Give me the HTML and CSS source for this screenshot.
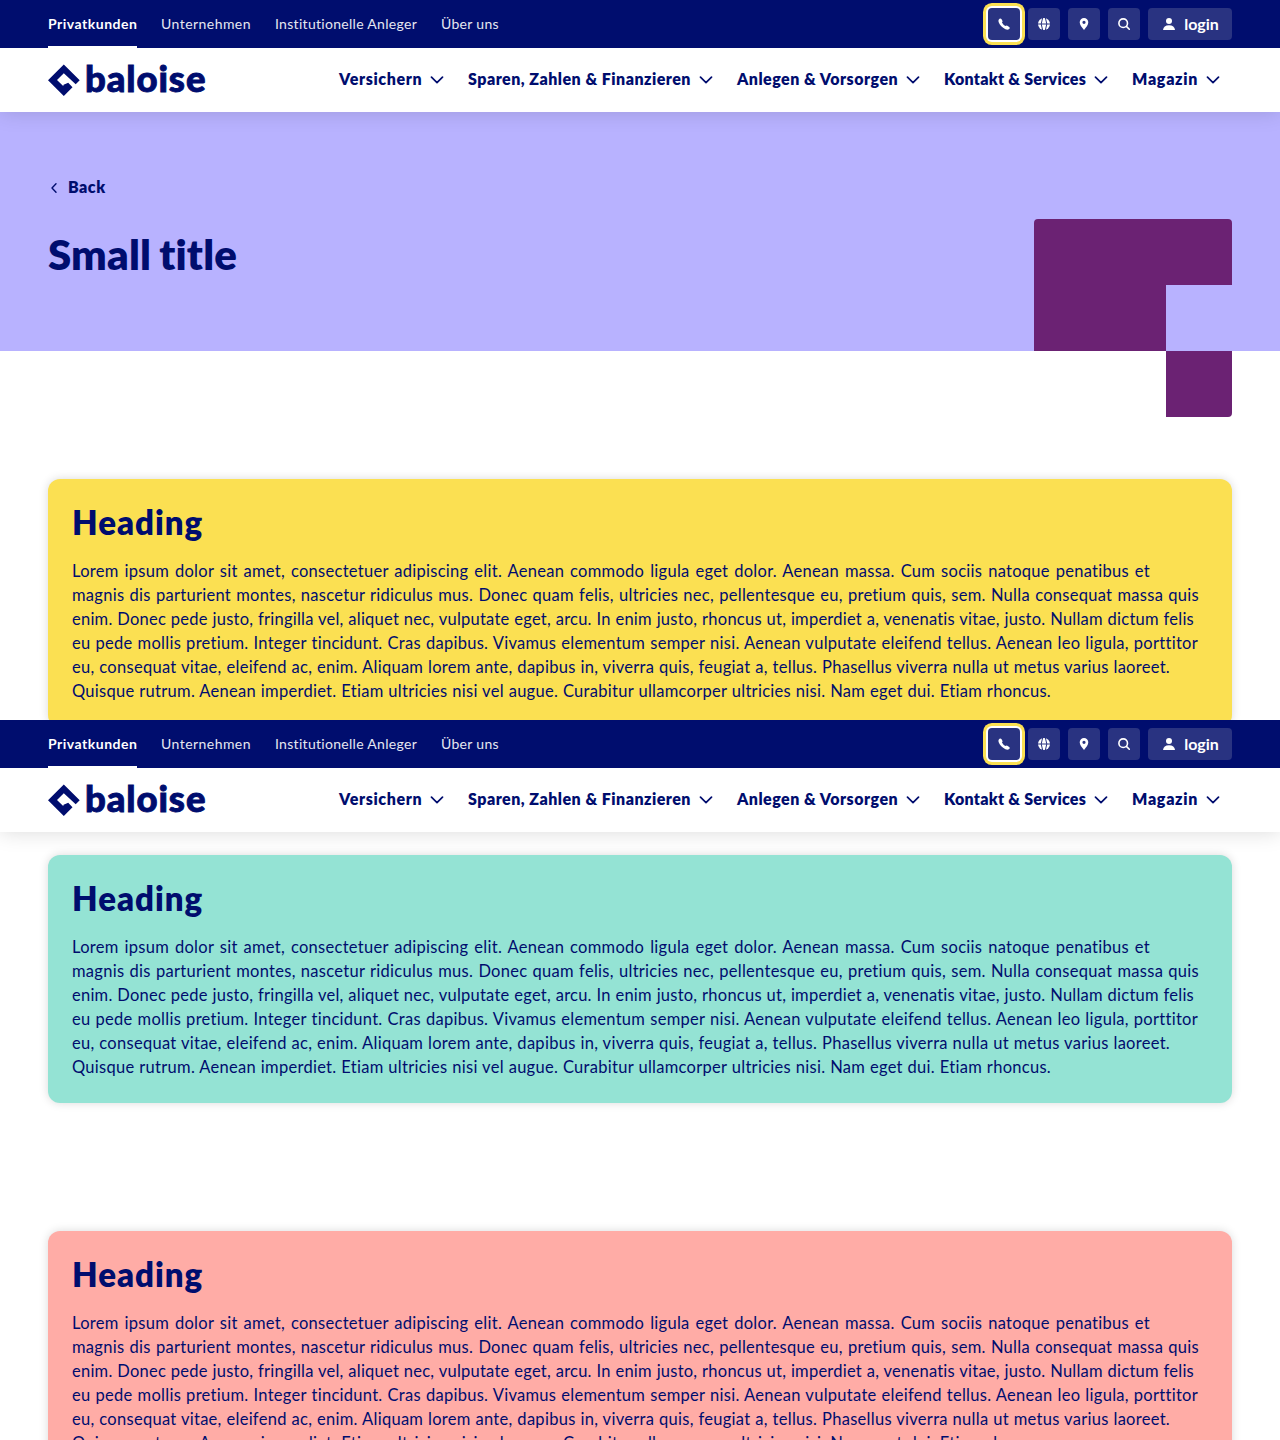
FILE: index.html
```html
<!DOCTYPE html>
<html lang="de">
<head>
<meta charset="utf-8">
<title>Baloise</title>
<link rel="stylesheet" href="styles.css">
</head>
<body>
<svg width="0" height="0" class="defs">
  <symbol id="diamond" viewBox="0 0 32 32"><path d="M15.8.6 31.7 16.3 27.700 20.200 15.800 9.300 9 16 15.200 22 15.600 20.800 20.200 18.800 24.500 23.200 15.800 32 0 16.300Z"/></symbol>
  <symbol id="chevron" viewBox="0 0 14 8"><path d="M1.5 1.2 7 6.6 12.500 1.2" fill="none" stroke="currentColor" stroke-width="1.7" stroke-linecap="round" stroke-linejoin="round"/></symbol>
  <symbol id="phone" viewBox="0 0 12 12"><path d="M1.500.7Q2.700 0 3.600 1.200L4.500 3Q4.600 3.800 3.900 4.500 5.200 6.900 7.500 8.100 8.400 7.300 9.300 7.700L11.200 8.900Q12.300 9.900 11.200 11 9.800 12.200 7.400 11.200 2.500 8.700.8 4.600-.2 1.900 1.500.7Z"/></symbol>
  <symbol id="globe" viewBox="0 0 12 12"><circle cx="6" cy="6" r="6"/><path d="M0 6H12M4.600 0Q1.800 6 4.600 12M7.400 0Q10.200 6 7.400 12" fill="none" stroke="#293381" stroke-width="1"/></symbol>
  <symbol id="pin" viewBox="0 0 10 12"><path fill-rule="evenodd" d="M5 0A4.300 4.300 0 0 1 9.300 4.300C9.300 7 7 9.500 5 12 3 9.500.7 7 .7 4.300A4.300 4.300 0 0 1 5 0ZM5 2.700A1.600 1.600 0 1 0 5 5.900 1.600 1.600 0 0 0 5 2.700Z"/></symbol>
  <symbol id="search" viewBox="0 0 12 12"><g fill="none" stroke="currentColor" stroke-width="1.600" stroke-linecap="round"><circle cx="5.200" cy="5.200" r="4.300"/><path d="M8.400 8.400 11.300 11.300"/></g></symbol>
  <symbol id="user" viewBox="0 0 12 12"><circle cx="6" cy="3" r="3"/><path d="M0 12Q.5 7.300 6 7.300T12 12Z"/></symbol>
</svg>

<section class="screen">
  <header class="header">
    <div class="meta">
      <nav class="meta-nav"><a class="active w1">Privatkunden</a><a class="w2">Unternehmen</a><a class="w3">Institutionelle Anleger</a><a class="w4">Über uns</a></nav>
      <div class="actions">
        <a class="btn focused"><svg class="i12"><use href="#phone"/></svg></a>
        <a class="btn"><svg class="i12"><use href="#globe"/></svg></a>
        <a class="btn"><svg class="i12"><use href="#pin"/></svg></a>
        <a class="btn"><svg class="i12"><use href="#search"/></svg></a>
        <a class="btn login"><svg class="i12"><use href="#user"/></svg>login</a>
      </div>
    </div>
    <div class="main">
      <a class="logo"><svg class="mark"><use href="#diamond"/></svg><span>baloise</span></a>
      <nav class="main-nav">
        <a><span class="n1">Versichern</span><svg class="chev"><use href="#chevron"/></svg></a>
        <a><span class="n2">Sparen, Zahlen &amp; Finanzieren</span><svg class="chev"><use href="#chevron"/></svg></a>
        <a><span class="n3">Anlegen &amp; Vorsorgen</span><svg class="chev"><use href="#chevron"/></svg></a>
        <a><span class="n4">Kontakt &amp; Services</span><svg class="chev"><use href="#chevron"/></svg></a>
        <a><span class="n5">Magazin</span><svg class="chev"><use href="#chevron"/></svg></a>
      </nav>
    </div>
  </header>
  <div class="stage">
    <a class="back"><svg width="6" height="10" viewBox="0 0 6 10"><path d="M5 .8 1 5 5 9.200" fill="none" stroke="currentColor" stroke-width="1.400" stroke-linecap="round" stroke-linejoin="round"/></svg><span>Back</span></a>
    <h1>Small title</h1>
    <svg class="shape" width="198" height="198" viewBox="0 0 198 198"><path d="M4 0H194A4 4 0 0 1 198 4V66H132V132H0V4A4 4 0 0 1 4 0ZM132 132H198V194A4 4 0 0 1 194 198H132Z"/></svg>
  </div>
  <article class="card yellow">
    <h2>Heading</h2>
    <p><span class="l1">Lorem ipsum dolor sit amet, consectetuer adipiscing elit. Aenean commodo ligula eget dolor. Aenean massa. Cum sociis natoque penatibus et</span> <span class="l2">magnis dis parturient montes, nascetur ridiculus mus. Donec quam felis, ultricies nec, pellentesque eu, pretium quis, sem. Nulla consequat massa quis</span> <span class="l3">enim. Donec pede justo, fringilla vel, aliquet nec, vulputate eget, arcu. In enim justo, rhoncus ut, imperdiet a, venenatis vitae, justo. Nullam dictum felis</span> <span class="l4">eu pede mollis pretium. Integer tincidunt. Cras dapibus. Vivamus elementum semper nisi. Aenean vulputate eleifend tellus. Aenean leo ligula, porttitor</span> <span class="l5">eu, consequat vitae, eleifend ac, enim. Aliquam lorem ante, dapibus in, viverra quis, feugiat a, tellus. Phasellus viverra nulla ut metus varius laoreet.</span> <span class="l6">Quisque rutrum. Aenean imperdiet. Etiam ultricies nisi vel augue. Curabitur ullamcorper ultricies nisi. Nam eget dui. Etiam rhoncus.</span></p>
  </article>
</section>

<section class="screen">
  <header class="header">
    <div class="meta">
      <nav class="meta-nav"><a class="active w1">Privatkunden</a><a class="w2">Unternehmen</a><a class="w3">Institutionelle Anleger</a><a class="w4">Über uns</a></nav>
      <div class="actions">
        <a class="btn focused"><svg class="i12"><use href="#phone"/></svg></a>
        <a class="btn"><svg class="i12"><use href="#globe"/></svg></a>
        <a class="btn"><svg class="i12"><use href="#pin"/></svg></a>
        <a class="btn"><svg class="i12"><use href="#search"/></svg></a>
        <a class="btn login"><svg class="i12"><use href="#user"/></svg>login</a>
      </div>
    </div>
    <div class="main">
      <a class="logo"><svg class="mark"><use href="#diamond"/></svg><span>baloise</span></a>
      <nav class="main-nav">
        <a><span class="n1">Versichern</span><svg class="chev"><use href="#chevron"/></svg></a>
        <a><span class="n2">Sparen, Zahlen &amp; Finanzieren</span><svg class="chev"><use href="#chevron"/></svg></a>
        <a><span class="n3">Anlegen &amp; Vorsorgen</span><svg class="chev"><use href="#chevron"/></svg></a>
        <a><span class="n4">Kontakt &amp; Services</span><svg class="chev"><use href="#chevron"/></svg></a>
        <a><span class="n5">Magazin</span><svg class="chev"><use href="#chevron"/></svg></a>
      </nav>
    </div>
  </header>
  <article class="card green">
    <h2>Heading</h2>
    <p><span class="l1">Lorem ipsum dolor sit amet, consectetuer adipiscing elit. Aenean commodo ligula eget dolor. Aenean massa. Cum sociis natoque penatibus et</span> <span class="l2">magnis dis parturient montes, nascetur ridiculus mus. Donec quam felis, ultricies nec, pellentesque eu, pretium quis, sem. Nulla consequat massa quis</span> <span class="l3">enim. Donec pede justo, fringilla vel, aliquet nec, vulputate eget, arcu. In enim justo, rhoncus ut, imperdiet a, venenatis vitae, justo. Nullam dictum felis</span> <span class="l4">eu pede mollis pretium. Integer tincidunt. Cras dapibus. Vivamus elementum semper nisi. Aenean vulputate eleifend tellus. Aenean leo ligula, porttitor</span> <span class="l5">eu, consequat vitae, eleifend ac, enim. Aliquam lorem ante, dapibus in, viverra quis, feugiat a, tellus. Phasellus viverra nulla ut metus varius laoreet.</span> <span class="l6">Quisque rutrum. Aenean imperdiet. Etiam ultricies nisi vel augue. Curabitur ullamcorper ultricies nisi. Nam eget dui. Etiam rhoncus.</span></p>
  </article>
  <article class="card red">
    <h2>Heading</h2>
    <p><span class="l1">Lorem ipsum dolor sit amet, consectetuer adipiscing elit. Aenean commodo ligula eget dolor. Aenean massa. Cum sociis natoque penatibus et</span> <span class="l2">magnis dis parturient montes, nascetur ridiculus mus. Donec quam felis, ultricies nec, pellentesque eu, pretium quis, sem. Nulla consequat massa quis</span> <span class="l3">enim. Donec pede justo, fringilla vel, aliquet nec, vulputate eget, arcu. In enim justo, rhoncus ut, imperdiet a, venenatis vitae, justo. Nullam dictum felis</span> <span class="l4">eu pede mollis pretium. Integer tincidunt. Cras dapibus. Vivamus elementum semper nisi. Aenean vulputate eleifend tellus. Aenean leo ligula, porttitor</span> <span class="l5">eu, consequat vitae, eleifend ac, enim. Aliquam lorem ante, dapibus in, viverra quis, feugiat a, tellus. Phasellus viverra nulla ut metus varius laoreet.</span> <span class="l6">Quisque rutrum. Aenean imperdiet. Etiam ultricies nisi vel augue. Curabitur ullamcorper ultricies nisi. Nam eget dui. Etiam rhoncus.</span></p>
  </article>
</section>
</body>
</html>
```
FILE: styles.css
```css
* { box-sizing: border-box; }
body { margin: 0; background: #fff; color: #000d6e; font-family: Lato, "Open Sans", sans-serif; font-size: 16px; line-height: 24px; font-variant-ligatures: none; }
h1, h2, p { margin: 0; }
.defs { display: block; height: 0; }
svg { display: block; fill: currentColor; flex: none; }
.screen { height: 720px; overflow: hidden; }

.header { position: relative; z-index: 2; height: 112px; background: #fff; box-shadow: 0 0 20px rgba(0, 0, 0, .15); }
.meta { height: 48px; padding: 0 48px; display: flex; justify-content: space-between; background: #000d6e; color: #fff; }
.meta-nav { display: flex; gap: 24px; font-size: 14px; line-height: 48px; white-space: nowrap; color: #e5e7f0; }
.meta-nav .active { font-weight: 700; color: #fff; border-bottom: 2px solid #fff; height: 48px; }
.w1 { width: 89px; letter-spacing: .5px; }
.w2 { width: 90px; letter-spacing: .45px; }
.w3 { width: 142px; letter-spacing: .3px; }
.w4 { width: 58px; letter-spacing: .3px; }
.actions { display: flex; align-items: center; gap: 8px; }
.btn { width: 32px; height: 32px; border-radius: 4px; background: #293381; display: flex; align-items: center; justify-content: center; }
.focused { box-shadow: 0 0 0 2px #fff, 0 0 0 5px #fbe052; }
.login { width: 84px; padding-left: 2px; gap: 9px; font-weight: 700; }
.i12 { width: 12px; height: 12px; }
.main { height: 64px; padding: 0 60px 0 48px; display: flex; align-items: center; justify-content: space-between; }
.logo { display: flex; align-items: center; gap: 5px; }
.logo span { padding-bottom: 4px; font-size: 36.5px; line-height: 32px; font-weight: 900; letter-spacing: .9px; -webkit-text-stroke: .9px currentColor; }
.mark { width: 32px; height: 32px; }
.main-nav { display: flex; gap: 24px; font-weight: 800; white-space: nowrap; }
.main-nav a { display: flex; align-items: center; gap: 8px; }
.main-nav span, .back span { padding-bottom: 2px; line-height: 22px; }
.chev { width: 14px; height: 8px; }
.n1 { width: 83px; letter-spacing: .62px; }
.n2 { width: 223px; letter-spacing: .48px; }
.n3 { width: 161px; letter-spacing: .48px; }
.n4 { width: 142px; letter-spacing: .25px; }
.n5 { width: 66px; letter-spacing: .7px; }

.stage { position: relative; height: 239px; padding: 64px 48px 0; background: #b8b2ff; }
.back { display: flex; align-items: center; gap: 11px; padding-left: 3px; font-weight: 800; letter-spacing: .5px; }
h1 { margin-top: 27px; font-size: 42px; line-height: 54px; font-weight: 800; letter-spacing: .2px; word-spacing: -2px; }
.shape { position: absolute; right: 48px; top: 107px; color: #6b2273; }

.card { height: 248px; margin: 0 48px; padding: 24px; border-radius: 12px; box-shadow: 0 0 10px rgba(0, 0, 0, .15); }
.stage + .card { margin-top: 128px; }
.header + .card { margin-top: 23px; }
.card + .card { margin-top: 128px; }
.yellow { background: #fbe052; }
.green { background: #94e3d4; }
.red { background: #ffaca6; }
h2 { font-size: 33px; line-height: 38px; font-weight: 800; letter-spacing: 1px; }
.card p { margin-top: 18px; }
.card p span { display: block; white-space: nowrap; font-size: 16.5px; letter-spacing: .28px; text-align-last: justify; }
.l1 { width: 1078px; }
.l2 { width: 1127px; }
.card p .l3 { width: 1122px; letter-spacing: .24px; }
.l4 { width: 1126px; }
.l5 { width: 1098px; }
.l6 { width: 979px; }
```
